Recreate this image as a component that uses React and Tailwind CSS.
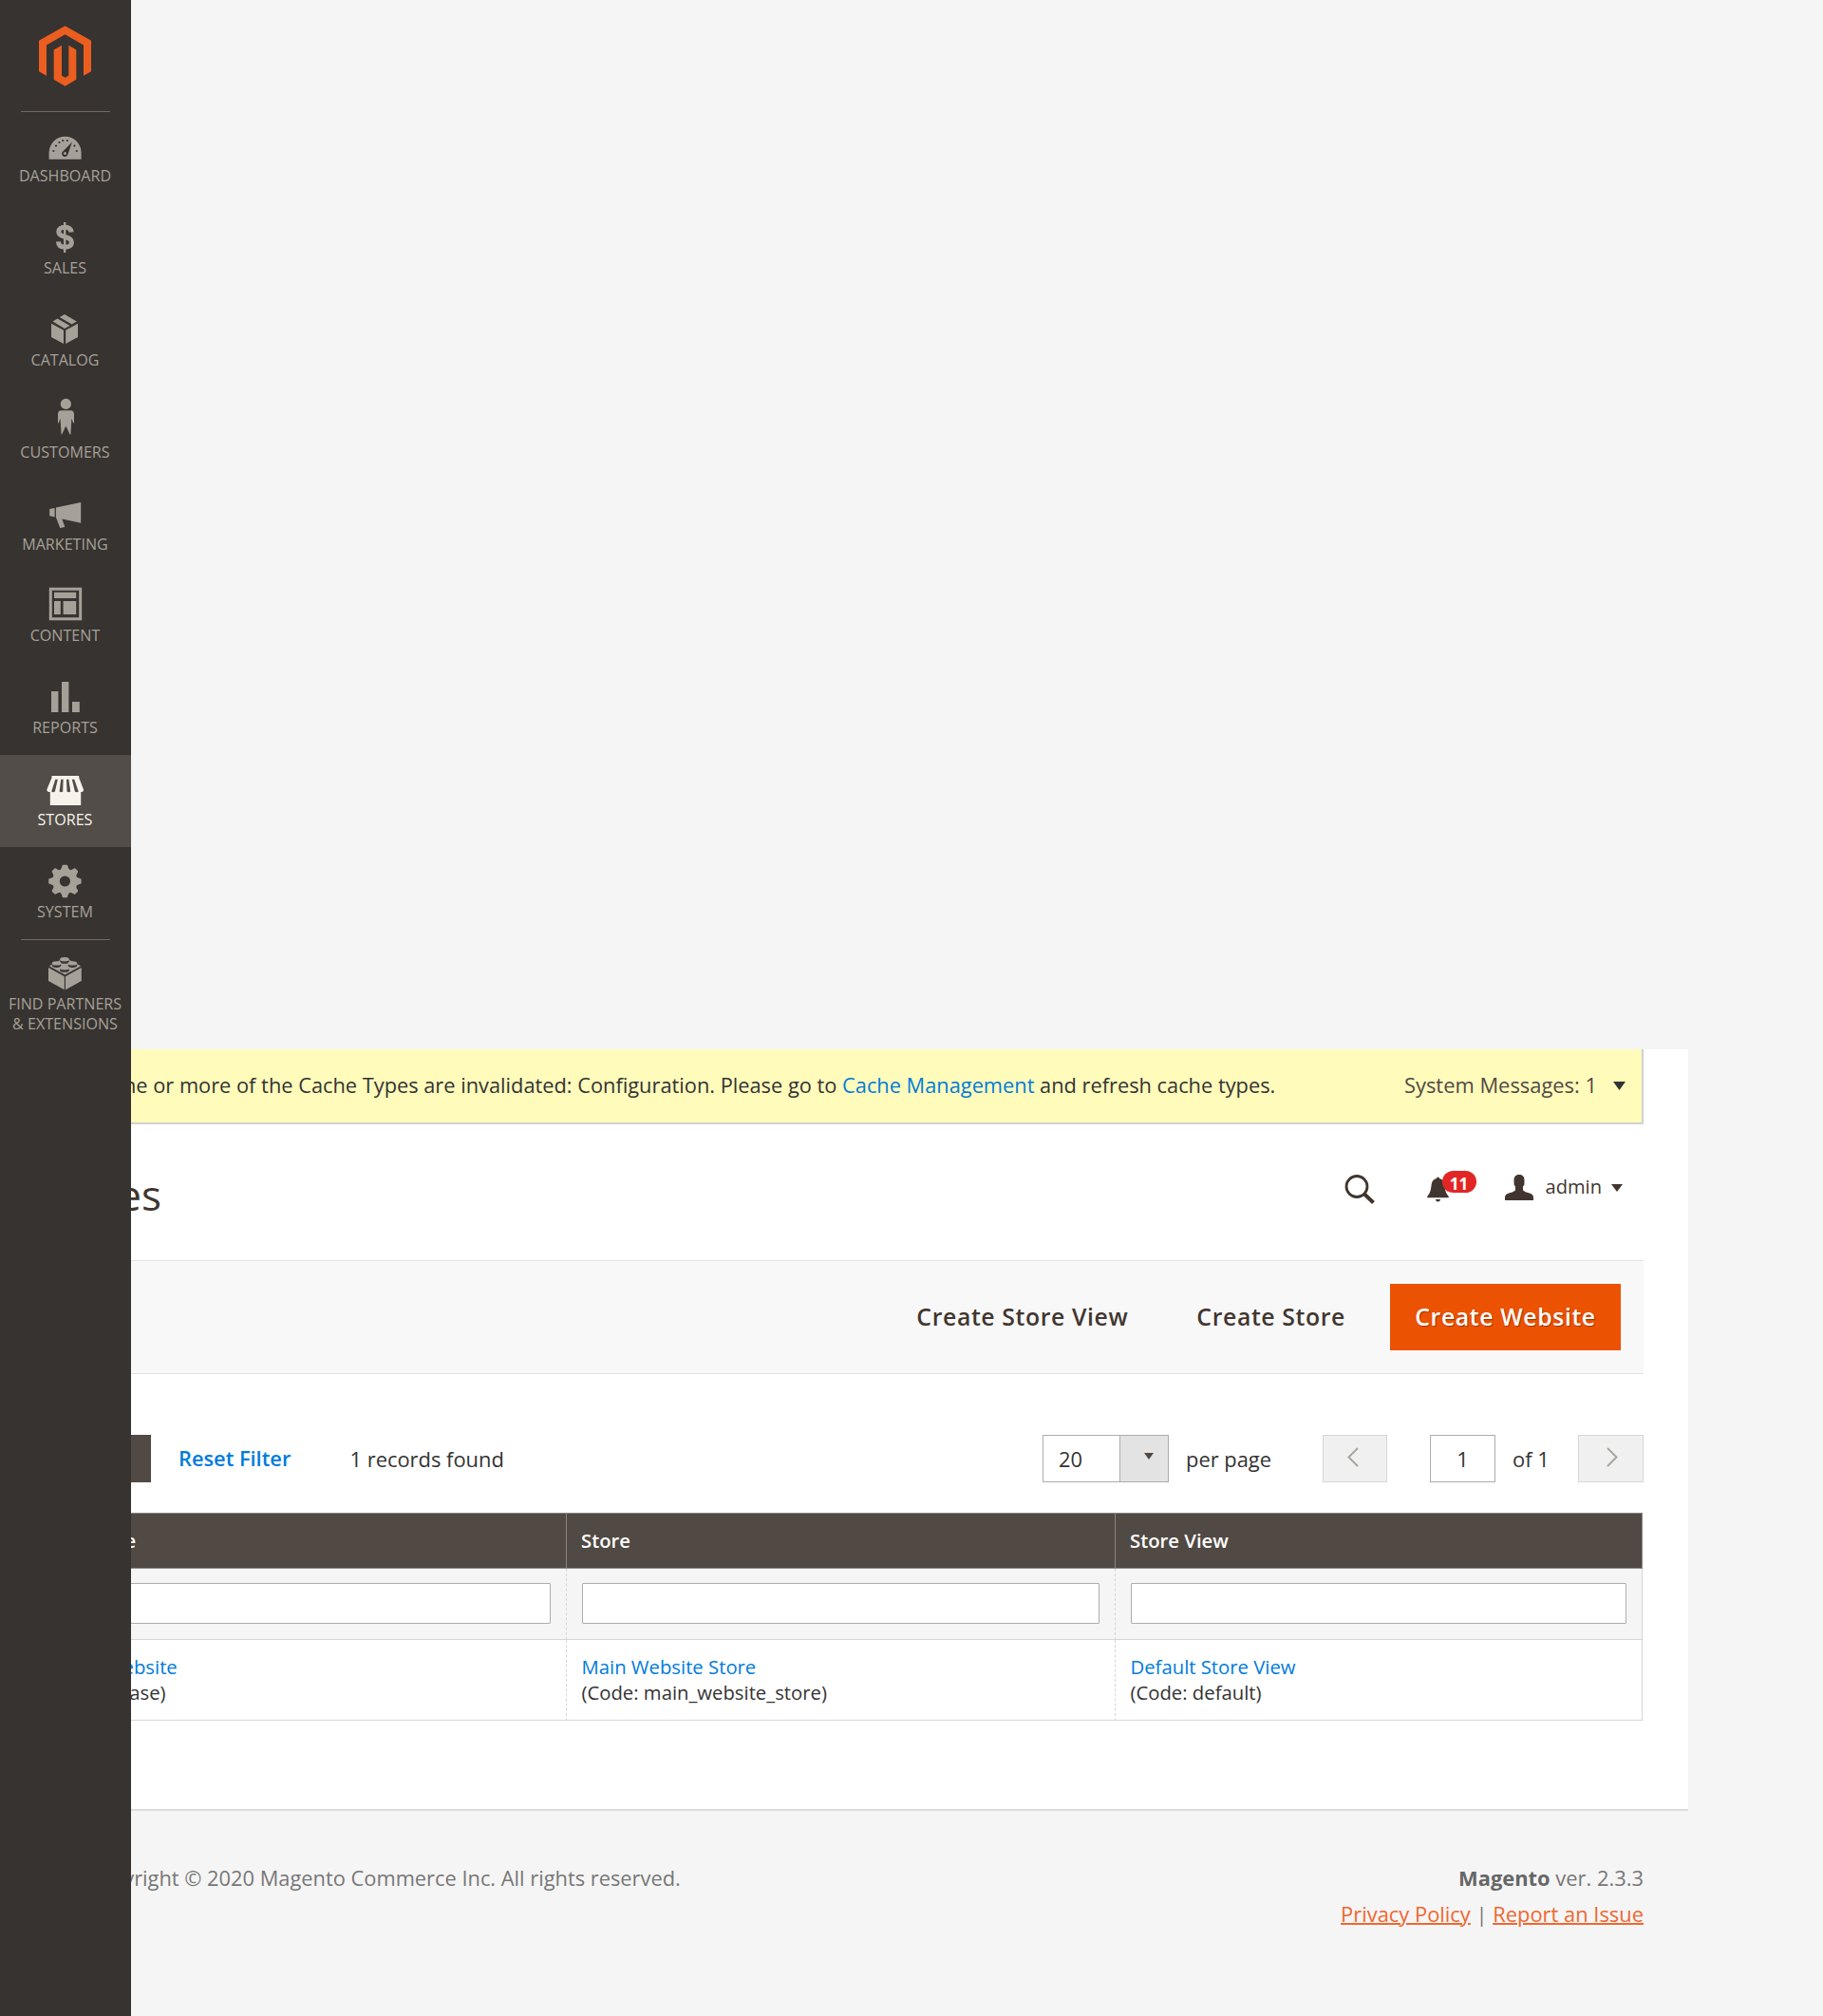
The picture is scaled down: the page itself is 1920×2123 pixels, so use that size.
const DashboardIcon = () => (
    <>
        <path d="M4.6 41.8V34.8a17 17 0 0 1 34 0V41.8z" />
        <g className="fill-[#373330]">
            <circle cx="9.4" cy="33" r="1.1" />
            <circle cx="12" cy="27.6" r="1.1" />
            <circle cx="15.4" cy="24" r="1.1" />
            <circle cx="19.2" cy="22" r="1.1" />
            <circle cx="23.8" cy="22" r="1.1" />
            <circle cx="31.4" cy="27.6" r="1.1" />
            <circle cx="33.8" cy="33" r="1.1" />
            <path d="M29 23.4L24.3 37a3.2 3.2 0 1 1-5.6-3z" />
        </g>
        <circle cx="21.5" cy="35.6" r="1.5" />
    </>
);

const SalesIcon = () => (
    <g fill="none" stroke="currentColor">
        <path strokeWidth="5" d="M28.2 21.6C27.8 17.6 25 16.3 21.3 16.3C17.3 16.3 14.8 18.2 14.8 21.1C14.8 24.5 17.8 25.6 21.5 26.5C25.6 27.5 28.4 28.8 28.4 32.2C28.4 35.5 25.6 37.2 21.5 37.2C17.3 37.2 14.6 35.3 14.4 31.3" />
        <path strokeWidth="2.4" d="M21.2 11V43" />
    </g>
);

const CatalogIcon = () => (
    <path d="M7 20.7L20 27.8V42L7 35zM22.2 27.8L35 20.7V35L22.2 42zM8.5 18.6L13.5 15.5L26.6 23L21 26.1zM15.8 14.1L21 11L33.8 18.5L28.7 21.5z" />
);

const CustomersIcon = () => (
    <>
        <circle cx="22.4" cy="8.4" r="5.6" />
        <path d="M17.5 15.2H27.3Q30.9 15.5 31 19V28.4H30.2L28.4 23.5L27.4 40.4H26.6L22.4 31.5L18.2 40.4H17.6L16.5 23.5L14.8 28.4H14V19Q14 15.5 17.5 15.2z" />
    </>
);

const MarketingIcon = () => (
    <path d="M5.2 22L10.6 20.9V30.4L5.2 29.3zM11.9 20.6L38.2 14.9V36.8L18.4 32.6L21.3 41L16.2 42L12.6 32.3L11.9 31z" />
);

const ContentIcon = () => (
    <>
        <path fillRule="evenodd" d="M4.8 7.8H39.2V42.2H4.8zM7.8 10.8V39.2H36.2V10.8z" />
        <path d="M10 12.8H33.2V19H10zM10 22H16.8V36H10zM19.6 22H33.2V36H19.6z" />
    </>
);

const ReportsIcon = () => <path d="M7 20H14.4V42H7zM18 10H25.4V42H18zM29 31H36.8V42H29z" />;

const StoresIcon = () => (
    <>
        <path d="M7.5 12H36.2V14L41 26.4Q41 29 38.2 29V43H5.8V29Q2.4 29 2.3 26.4L7.5 14z" />
        <path className="fill-[#524d49]" d="M11.3 15.7H13.8L10.9 28.5Q9 29.8 7.2 28.5zM17.2 15.7H19.6L19.2 28.5Q17.4 29.8 15.6 28.5zM23 15.7H25.4L27.2 28.5Q25.2 29.8 23.5 28.5zM28.8 15.7H31.3L35.7 28.5Q33.8 29.8 31.9 28.5z" />
    </>
);

const SystemIcon = () => (
    <g transform="translate(21.4 26)">
        <circle r="9.3" fill="none" stroke="currentColor" strokeWidth="7.4" />
        {[0, 45, 90, 135, 180, 225, 270, 315].map(angle => (
            <path key={angle} transform={`rotate(${angle})`} d="M-5.2 -11.4Q-3.4 -13 -2.8 -16.4Q-2.6 -17.2 -1.8 -17.2H1.8Q2.6 -17.2 2.8 -16.4Q3.4 -13 5.2 -11.4z" />
        ))}
    </g>
);

const PartnersIcon = () => (
    <>
        <path d="M4 20L20.8 29.2V43.2L4 34zM22 29.2L38.8 20V34L22 43.2zM4.8 18.3L21.4 9.6L38.2 18.3L21.4 27.6z" />
        {[[21, 11.2], [12.6, 15.4], [29.4, 15.4], [21, 20.2]].map(([cx, cy]) => (
            <g key={`${cx}-${cy}`}>
                <ellipse className="fill-[#373330]" cx={cx} cy={cy + 2.2} rx="4.8" ry="2.4" />
                <ellipse cx={cx} cy={cy} rx="4.8" ry="2.2" />
            </g>
        ))}
    </>
);

const menuItems = [
    {title: 'Dashboard', Icon: DashboardIcon, line: true},
    {title: 'Sales', Icon: SalesIcon},
    {title: 'Catalog', Icon: CatalogIcon},
    {title: 'Customers', Icon: CustomersIcon},
    {title: 'Marketing', Icon: MarketingIcon},
    {title: 'Content', Icon: ContentIcon},
    {title: 'Reports', Icon: ReportsIcon},
    {title: 'Stores', Icon: StoresIcon, active: true},
    {title: 'System', Icon: SystemIcon},
    {title: 'Find Partners & Extensions', Icon: PartnersIcon, line: true},
];

const columns = [
    {title: 'Web Site', name: 'Main Website', code: 'base'},
    {title: 'Store', name: 'Main Website Store', code: 'main_website_store'},
    {title: 'Store View', name: 'Default Store View', code: 'default'},
];

const Caret = ({className}) => (
    <svg className={className} viewBox="0 0 12 8" preserveAspectRatio="none" fill="currentColor">
        <path d="M0 0H12L6 8z" />
    </svg>
);

const Sidebar = () => (
    <aside className="absolute inset-y-0 left-0 z-10 w-[138px] bg-[#373330]">
        <div className="flex h-[116.4px] justify-center pt-[27px]">
            <svg className="mr-px h-16 w-[55px]" viewBox="123 81 165 191" fill="#eb5e20">
                <path d="M205.500 81L288 128V225L264 239V142L205.500 108L147 142V239L123 225V128z" />
                <path d="M195 143V238L205.500 244.500L217 238V143L241 157V251L205.500 272L170 251V157z" />
            </svg>
        </div>
        <nav>
            {menuItems.map(({title, Icon, active, line}) => (
                <a
                    key={title}
                    className={active
                        ? 'relative flex h-[96.93px] flex-col items-center bg-[#524d49] pt-2.5 text-[#f7f3eb]'
                        : 'relative flex h-[96.93px] flex-col items-center pt-2.5 text-[#a6a198]'}
                >
                    {line && <span className="absolute top-[0.5px] left-[22px] h-px w-[94px] bg-[#736963]" />}
                    <svg className="h-11 w-11 shrink-0" viewBox="0 0 44 44" fill="currentColor"><Icon /></svg>
                    <span className="mt-[4.43px] mr-px w-[130px] text-center text-[16.1px] leading-[21px] uppercase">{title}</span>
                </a>
            ))}
        </nav>
    </aside>
);

const SystemMessages = () => (
    <div className="flex h-[79px] items-center border-r-2 border-b-2 border-[#d1d1d1] bg-[#fffbbb] pr-[17px] pb-0.5 pl-[73px]">
        <p className="grow text-[21.8px]">
            One or more of the Cache Types are invalidated: Configuration. Please go to <a className="text-[#007bdb]">Cache Management</a> and refresh cache types.
        </p>
        <span className="text-[#514943]">System Messages: 1</span>
        <Caret className="mt-0.5 ml-[17px] h-[9px] w-[13px]" />
    </div>
);

const PageHeader = () => (
    <header className="flex h-[143px] items-start justify-between pr-[22px] text-[#41362f]">
        <h1 className="mt-[44px] text-[44px] leading-[60px]">Stores</h1>
        <div className="mt-[46px] flex h-10 items-center">
            <svg className="mt-[5px] h-8 w-8" viewBox="0 0 32 32" fill="none" stroke="currentColor">
                <circle cx="13" cy="12.500" r="11" strokeWidth="2.8" />
                <path d="M21 20.500L30.500 29.500" strokeWidth="4" />
            </svg>
            <div className="relative mt-1 ml-[55px]">
                <svg className="h-[27px] w-[23px]" viewBox="0 0 23 27" fill="currentColor">
                    <path d="M10 2Q10 .5 11.500 .5T13 2Q17.500 3.200 18.300 8C19 14 19.500 17 22.800 21V22.200H.2V21C3.500 17 4 14 4.700 8Q5.500 3.200 10 2zM8.800 24H14.200Q13.500 26.500 11.500 26.500T8.800 24z" />
                </svg>
                <span className="absolute -top-1.5 left-4 h-[23px] w-9 rounded-full bg-[#e22626] text-center text-[17.2px] leading-[27px] font-bold text-white">11</span>
            </div>
            <svg className="ml-[59px] h-[27px] w-[30px]" viewBox="0 0 30 27" fill="currentColor">
                <path d="M15 0C19 0 20.500 2.500 20.500 6V8.500Q20.800 11 19 12.500V16.500Q21 18.500 26 19.500Q30 20.500 30 24V27H0V24Q0 20.500 4 19.500Q9 18.500 11 16.500V12.500Q9.200 11 9.500 8.500V6C9.500 2.500 11 0 15 0z" />
            </svg>
            <span className="ml-[13px] text-[20.1px] leading-7">admin</span>
            <Caret className="mt-px ml-2.5 h-2 w-3" />
        </div>
    </header>
);

const PageActions = () => (
    <div className="flex h-[120px] items-center justify-end border-y border-[#e3e3e3] bg-[#f8f8f8] pr-6 text-[24.8px] font-semibold tracking-[0.025em] text-[#41362f]">
        <button className="mr-[72px] pb-0.5">Create Store View</button>
        <button className="mr-[47px] pb-0.5">Create Store</button>
        <button className="h-[70px] w-[243px] bg-[#eb5202] pb-0.5 text-white [text-shadow:1px_1px_1px_rgba(0,0,0,0.35)]">Create Website</button>
    </div>
);

const PagerButton = ({children, className}) => (
    <button className={`flex h-[50px] justify-center border border-[#d6d6d6] bg-[#f0f0f0] pt-3 text-[#aaa6a0] ${className}`}>
        <svg className="h-[22px] w-[14px]" viewBox="0 0 14 22" fill="none" stroke="currentColor" strokeWidth="2">
            {children}
        </svg>
    </button>
);

const GridToolbar = () => (
    <div className="mt-16 flex h-[50px] items-center">
        <button className="h-[50px] w-[119px] bg-[#514943] font-semibold text-white">Search</button>
        <button className="ml-[29px] w-[118px] text-left text-[21.8px] font-semibold whitespace-nowrap text-[#007bdb]">Reset Filter</button>
        <span className="mt-0.5 ml-[62.5px] grow">1 records found</span>
        <div className="flex h-[50px] w-[133px] border border-[#adadad]">
            <span className="w-20 pl-4 leading-[50px]">20</span>
            <span className="flex grow justify-center border-l border-[#adadad] bg-[#e3e3e3] pt-[18px] pl-2.5 text-[#514943]">
                <Caret className="h-[7px] w-2.5" />
            </span>
        </div>
        <span className="mt-0.5 ml-[18px] w-[144px]">per page</span>
        <PagerButton className="w-[68px] pr-[5px]"><path d="M12 1L2.500 10.500L12 20" /></PagerButton>
        <span className="ml-[45px] h-[50px] w-[69px] border border-[#adadad] text-center leading-[50px]">1</span>
        <span className="mt-0.5 ml-[18px] w-[69px]">of 1</span>
        <PagerButton className="w-[69px] pl-[3px]"><path d="M2 1L11.500 10.500L2 20" /></PagerButton>
    </div>
);

const StoresGrid = () => (
    <table className="mt-8 w-[1690px] table-fixed border-separate border-spacing-0 text-[20.3px]">
        <colgroup>
            <col className="w-[557px]" />
            <col className="w-[578px]" />
            <col />
        </colgroup>
        <thead>
            <tr className="h-[59px] bg-[#514943] text-left text-white">
                {columns.map(({title}) => (
                    <th key={title} className="border-y border-r border-[#8a837f] px-[15px] pt-0 pb-0.5 leading-7 font-semibold first:pl-[18px]">{title}</th>
                ))}
            </tr>
            <tr className="h-[75px] bg-[#f5f5f5]">
                {columns.map(({title}) => (
                    <td key={title} className="border-r border-b border-dashed border-[#d6d6d6] px-4 py-0 align-top [border-bottom-style:solid] last:[border-right-style:solid]">
                        <div className="mt-[15px] h-[43px] rounded-[1px] border border-[#adadad] bg-white" />
                    </td>
                ))}
            </tr>
        </thead>
        <tbody>
            <tr className="h-[85px]">
                {columns.map(({name, code}) => (
                    <td key={name} className="border-r border-b border-dashed border-[#d6d6d6] px-[15.5px] py-0 leading-[27px] [border-bottom-style:solid] first:pl-[18.5px] last:[border-right-style:solid]">
                        <a className="text-[#007bdb]">{name}</a><br />
                        (Code: {code})
                    </td>
                ))}
            </tr>
        </tbody>
    </table>
);

const Footer = () => (
    <footer className="flex justify-between pt-[52px] pr-[47px] pl-[90px] leading-[38px] text-[#777]">
        <p className="text-[21.84px]">Copyright © 2020 Magento Commerce Inc. All rights reserved.</p>
        <div className="text-right">
            <p><strong className="text-[#666]">Magento</strong> ver. 2.3.3</p>
            <p>
                <a className="text-[#ef672f] underline decoration-2">Privacy Policy</a> | <a className="text-[#ef672f] underline decoration-2">Report an Issue</a>
            </p>
        </div>
    </footer>
);

const App = () => (
    <div className="relative h-[2123px] w-[1920px] overflow-hidden bg-[#f5f5f5] pt-[1105px] font-['Open_Sans',sans-serif] text-[21.9px] leading-[30px] text-[#333]">
        <Sidebar />
        <div className="w-[1778px]">
            <main className="h-[802px] border-b-2 border-[#ddd] bg-white pr-[47px] pl-10">
                <SystemMessages />
                <PageHeader />
                <PageActions />
                <GridToolbar />
                <StoresGrid />
            </main>
            <Footer />
        </div>
    </div>
);

export default App;
